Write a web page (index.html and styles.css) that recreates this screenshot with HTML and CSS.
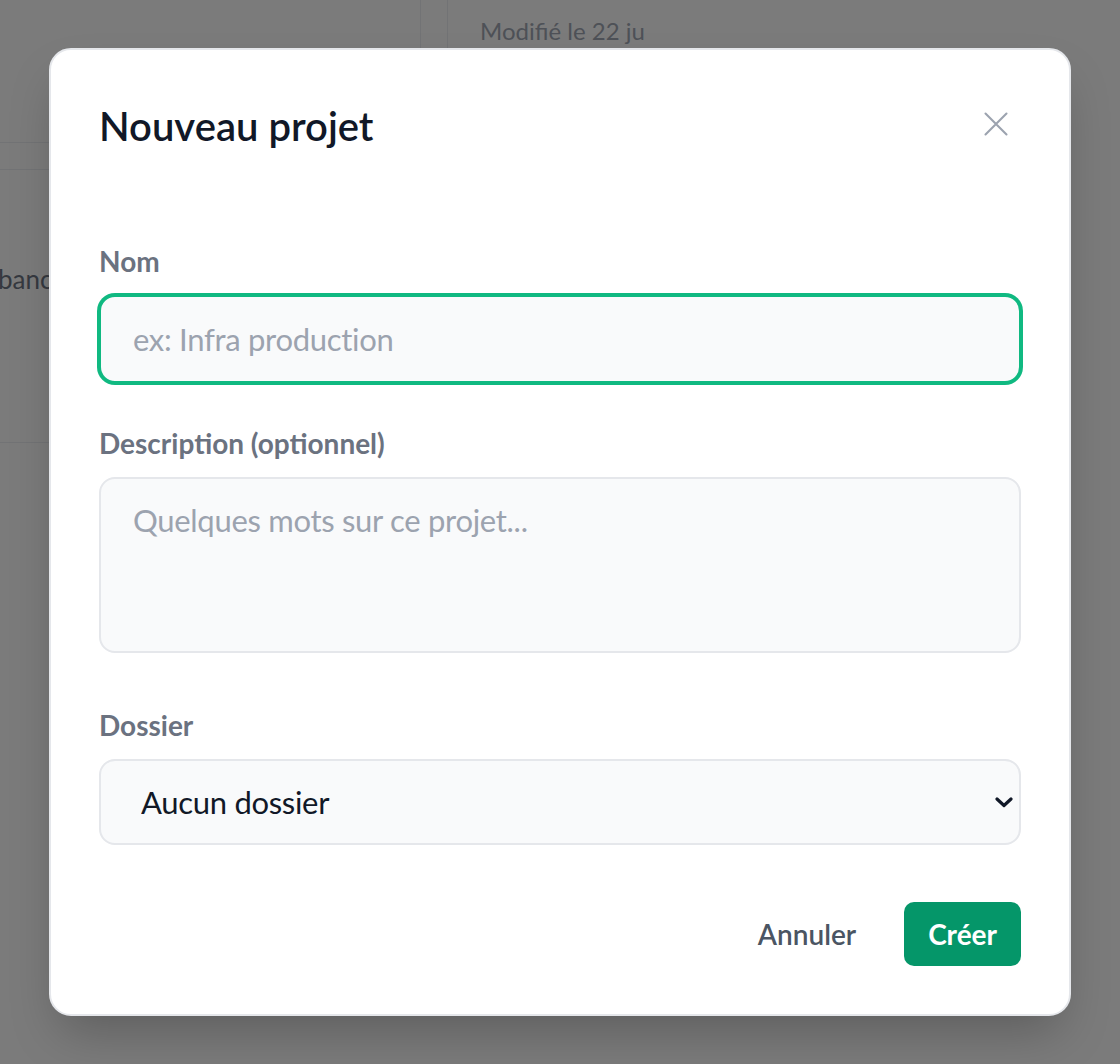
FILE: index.html
```html
<!DOCTYPE html>
<html lang="fr">
<head>
<meta charset="utf-8">
<title>Nouveau projet</title>
<link rel="stylesheet" href="styles.css">
</head>
<body>
<div class="page">
  <aside class="side">
    <div class="side-head"></div>
    <div class="side-tabs"></div>
    <div class="side-row"><span class="side-text">bancaire</span></div>
  </aside>
  <div class="rail"></div>
  <main class="main">
    <div class="meta"><span class="meta-clip">Modifié le 22 juillet</span></div>
  </main>
</div>

<div class="overlay">
  <div class="modal" role="dialog" aria-labelledby="t">
    <div class="modal-head">
      <h2 id="t" class="title">Nouveau projet</h2>
      <button class="close" aria-label="Fermer">
        <svg viewBox="0 0 24 24" width="42" height="42" fill="none" stroke="#9ca3af" stroke-width="1.2" stroke-linecap="round"><path d="M6 18L18 6M6 6l12 12"/></svg>
      </button>
    </div>
    <form class="form">
      <div class="field">
        <label class="label" for="nom">Nom</label>
        <input id="nom" class="control input focused" type="text" placeholder="ex: Infra production">
      </div>
      <div class="field">
        <label class="label" for="desc">Description (optionnel)</label>
        <textarea id="desc" class="control area" placeholder="Quelques mots sur ce projet..."></textarea>
      </div>
      <div class="field field-last">
        <label class="label" for="dos">Dossier</label>
        <div class="select-wrap">
          <select id="dos" class="control select">
            <option>Aucun dossier</option>
          </select>
          <svg class="chev" viewBox="0 0 18 11" width="18" height="11" fill="none" stroke="#111827" stroke-width="3.2" stroke-linecap="round" stroke-linejoin="round"><polyline points="2,2 9,8.5 16,2"/></svg>
        </div>
      </div>
      <div class="actions">
        <button type="button" class="btn btn-ghost">Annuler</button>
        <button type="button" class="btn btn-primary">Créer</button>
      </div>
    </form>
  </div>
</div>
</body>
</html>
```
FILE: styles.css
```css
* { box-sizing: border-box; }
html, body { margin: 0; padding: 0; }
body {
  width: 1120px;
  height: 1064px;
  overflow: hidden;
  font-family: Lato, "Noto Sans", "Liberation Sans", sans-serif;
  background: #f7f7f7;
  position: relative;
}

/* background page */
.page {
  display: flex;
  align-items: flex-start;
  height: 1064px;
}
.side {
  width: 421px;
  display: flex;
  flex-direction: column;
}
.side-head { height: 143px; border-bottom: 1px solid #e5e7eb; border-right: 1px solid #e5e7eb; }
.side-tabs { height: 27px; border-bottom: 1px solid #e5e7eb; }
.side-row {
  height: 273px;
  border-bottom: 1px solid #e5e7eb;
  padding-top: 93px;
  overflow: hidden;
}
.side-text {
  display: block;
  margin-left: -2px;
  font-size: 26px;
  color: #6b7280;
  white-space: nowrap;
}
.rail { width: 27px; height: 143px; border-right: 1px solid #e5e7eb; }
.main { flex: 1; padding: 15px 0 0 32px; }
.meta { font-size: 24px; color: #9ca3af; line-height: 32px; }
.meta-clip { display: inline-block; width: 166px; overflow: hidden; white-space: nowrap; vertical-align: top; }

/* overlay + modal */
.overlay {
  position: absolute;
  inset: 0;
  background: rgba(0, 0, 0, 0.5);
  display: flex;
  align-items: center;
  justify-content: center;
}
.modal {
  width: 1022px;
  background: #fff;
  border: 2px solid #e5e7eb;
  border-radius: 22px;
  padding: 48px;
  box-shadow: 0 25px 50px -12px rgba(0, 0, 0, 0.25);
}
.modal-head {
  display: flex;
  justify-content: space-between;
  align-items: flex-start;
}
.title {
  margin: 0;
  font-size: 40px;
  line-height: 56px;
  font-weight: 600;
  color: #111827;
}
.close {
  margin: 5px 4px 0 0;
  padding: 0;
  width: 42px;
  height: 42px;
  border: 0;
  background: none;
  display: flex;
}
.form {
  margin-top: 87px;
  display: flex;
  flex-direction: column;
}
.field { display: flex; flex-direction: column; margin-bottom: 40px; }
.field:nth-child(2) { margin-bottom: 52px; }
.field-last { margin-bottom: 57px; }
.label {
  font-size: 28px;
  line-height: 40px;
  font-weight: 700;
  color: #6b7280;
  margin-bottom: 14px;
}
.control {
  display: block;
  width: 100%;
  font-family: inherit;
  font-size: 31px;
  letter-spacing: -0.3px;
  color: #111827;
  background: #f9fafb;
  border: 2px solid #e5e7eb;
  border-radius: 16px;
  outline: none;
}
.control::placeholder { color: #9ca3af; opacity: 1; }
.input { height: 88px; padding: 0 32px; }
.focused {
  border-color: #10b981;
  box-shadow: 0 0 0 2px #10b981;
}
.area {
  height: 176px;
  padding: 17px 32px;
  line-height: 48px;
  resize: none;
}
.select-wrap { position: relative; }
.select {
  height: 86px;
  padding: 0 60px 0 40px;
  appearance: none;
  -webkit-appearance: none;
}
.chev {
  position: absolute;
  right: 8px;
  top: 38px;
  pointer-events: none;
}
.actions {
  display: flex;
  justify-content: flex-end;
  gap: 24px;
}
.btn {
  height: 64px;
  padding: 0 24px;
  border: 0;
  border-radius: 10px;
  font-family: inherit;
  font-size: 28px;
  font-weight: 700;
}
.btn-ghost { background: transparent; color: #4b5563; font-weight: 600; }
.btn-primary { background: #059669; color: #fff; }
```
